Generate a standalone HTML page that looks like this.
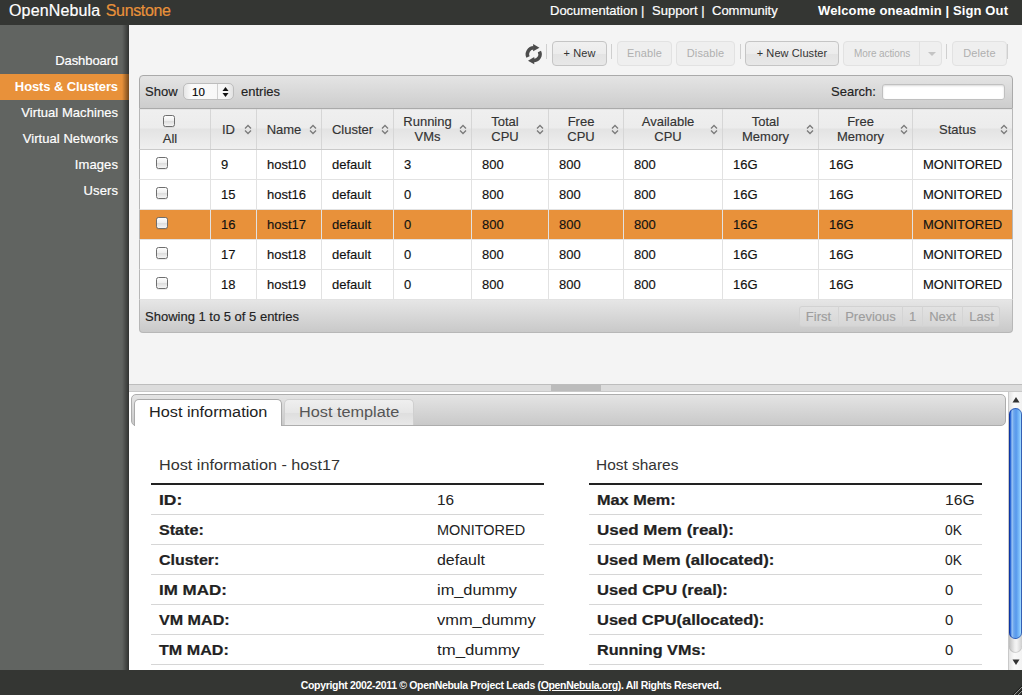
<!DOCTYPE html>
<html><head><meta charset="utf-8">
<style>
*{box-sizing:border-box;margin:0;padding:0}
html,body{width:1022px;height:695px;overflow:hidden;background:#f4f4f4;font-family:"Liberation Sans",sans-serif;position:relative}
.abs{position:absolute}
#hdr{left:0;top:0;width:1022px;height:25px;background:#343633}
#logo{left:9px;top:2px;font-size:16px;color:#fff;white-space:nowrap;-webkit-text-stroke:0.2px #fff}
#logo span{color:#e8913a;-webkit-text-stroke:0.2px #e8913a}
.tl{top:3px;font-size:13px;color:#fff;white-space:nowrap;-webkit-text-stroke:0.2px #fff}
#side{left:0;top:25px;width:129px;height:645px;background:#616461}
#side .shd{position:absolute;right:0;top:0;width:7px;height:100%;background:linear-gradient(to right,rgba(0,0,0,0),rgba(0,0,0,.5))}
.mi{position:absolute;left:0;width:129px;height:26px;line-height:26px;text-align:right;padding-right:11px;font-size:13px;color:#fff;white-space:nowrap;-webkit-text-stroke:0.2px #fff}
.mi.act{background:#e8913a;font-weight:bold;-webkit-text-stroke:0}
#ftr{left:0;top:670px;width:1022px;height:25px;background:#343633;color:#fff;font-size:10.5px;font-weight:bold;text-align:center;line-height:25px;padding-top:3px;white-space:nowrap;letter-spacing:-0.33px}
#content{left:129px;top:25px;width:893px;height:359px;background:#f4f4f4;overflow:hidden}
.btn{position:absolute;height:25px;border:1px solid #c5c5c5;border-radius:4px;background:linear-gradient(#f0f0f0 0%,#ececec 50%,#e3e3e3 51%,#e8e8e8 100%);font-size:11px;color:#333;text-align:center;line-height:23px;white-space:nowrap;letter-spacing:0.1px}
.btn.dis{border-color:#e2e2e2;background:#efefef;color:#b0b0b0}
.sep{position:absolute;width:1px;height:15px;background:#cfcfcf}
#dt{left:139px;top:75px;width:874px;height:258px;-webkit-text-stroke:0.15px currentColor}
#dttop{position:absolute;left:0;top:0;width:874px;height:34px;border:1px solid #aaa;border-radius:4px 4px 0 0;background:linear-gradient(#e4e4e4,#cdcdcd)}
#dtbot{position:absolute;left:0;top:225px;width:874px;height:33px;border:1px solid #b7b7b7;border-top:none;border-radius:0 0 4px 4px;background:linear-gradient(#e6e6e6,#c9c9c9)}
.t13{font-size:13px;color:#222;white-space:nowrap;position:absolute}
.row{position:absolute;left:0;width:874px;height:30px;background:#fff;border-bottom:1px solid #e2e2e2;border-left:1px solid #b7b7b7;border-right:1px solid #b7b7b7}
.row.sel{background:#e8913a}
.cell{position:absolute;top:0;height:29px;line-height:29px;font-size:13px;color:#111;padding-left:10px;border-left:1px solid #e2e2e2;white-space:nowrap}
.hrow{position:absolute;left:0;top:34px;width:874px;height:41px;background:linear-gradient(#dcdcdc 0,#efefef 1px,#ececec 19px,#e3e3e3 20px,#efefef 39px);border-bottom:1px solid #cacaca}
.hcell{position:absolute;top:0;height:40px;font-size:13px;color:#333;border-left:1px solid #d6d6d6;white-space:nowrap;text-align:center;line-height:14px;display:flex;align-items:center;justify-content:center;padding-left:10px;padding-right:20px;padding-top:1px}
.sort{position:absolute;right:4px;top:15px;width:8px;height:11px}
.cb{position:absolute;width:12px;height:12px;border:1px solid #6e6e6e;border-radius:2.5px;background:linear-gradient(#fdfdfd 0%,#eeeeee 50%,#dcdcdc 51%,#f4f4f4 100%);box-shadow:0 1px 0 rgba(0,0,0,.08)}
.pg{position:absolute;top:6px;height:21px;line-height:21px;font-size:13px;color:#9d9d9d;text-align:center;border-left:1px solid #d4d4d4}
#split{left:129px;top:384px;width:893px;height:8px;background:#dcdcdc;border-top:1px solid #bdbdbd;border-bottom:1px solid #c8c8c8}
#panel{left:129px;top:392px;width:879px;height:278px;background:#fff;overflow:hidden}
#nav{position:absolute;left:2px;top:2px;width:875px;height:32px;border:1px solid #adadad;border-radius:5px;background:linear-gradient(#e4e4e4,#c9c9c9)}
.tab{position:absolute;top:4px;height:27px;border:1px solid #b4b4b4;border-bottom:none;border-radius:5px 5px 0 0;font-size:14px;white-space:nowrap;line-height:25px;letter-spacing:0.9px}
.ititle{position:absolute;font-size:14px;color:#333;white-space:nowrap;letter-spacing:0.95px}
.itab{position:absolute;width:393px;border-top:2px solid #222}
.ir{position:absolute;left:0;width:393px;height:30px;border-bottom:1px solid #d6d6d6;font-size:14px;color:#222;white-space:nowrap}
.ir b{position:absolute;left:8px;top:7px;color:#222;-webkit-text-stroke:0.2px #222}
.ir span{position:absolute;top:7px}
#sb{left:1008px;top:392px;width:14px;height:278px;border-left:1px solid #c9c9c9;background:linear-gradient(to right,#e4e4e4,#fafafa 40%,#f2f2f2)}
</style></head>
<body>
<div id="hdr" class="abs">
<div id="logo" class="abs"><span style="color:#fff;-webkit-text-stroke:0.2px #fff;letter-spacing:0.15px">OpenNebula</span> <span style="letter-spacing:-0.35px;margin-left:1px">Sunstone</span></div>
<div class="abs tl" style="left:550px">Documentation |</div>
<div class="abs tl" style="left:652px">Support |</div>
<div class="abs tl" style="left:712px">Community</div>
<div class="abs tl" style="left:818px;font-weight:bold;letter-spacing:0.12px;-webkit-text-stroke:0">Welcome oneadmin | Sign Out</div>
</div>
<div id="side" class="abs">
<div class="mi" style="top:23px;letter-spacing:-0.1px">Dashboard</div>
<div class="mi act" style="top:49px;letter-spacing:-0.1px">Hosts &amp; Clusters</div>
<div class="mi" style="top:75px;letter-spacing:0.05px">Virtual Machines</div>
<div class="mi" style="top:101px;letter-spacing:0.05px">Virtual Networks</div>
<div class="mi" style="top:127px;letter-spacing:0.1px">Images</div>
<div class="mi" style="top:153px;letter-spacing:0.1px">Users</div>
<div class="shd"></div>
</div>
<div id="content" class="abs">
<svg class="abs" style="left:393px;top:17px" width="24" height="24" viewBox="0 0 24 24"><g transform="translate(11.7 12.2) scale(1.1) translate(-11.7 -11.8)"><path d="M6.5 14.3 A5.8 5.8 0 0 1 11.7 6.0" fill="none" stroke="#4c4c4c" stroke-width="3.2"/><path d="M11.2 2.6 L16.9 5.9 L11.2 9.2 Z" fill="#4c4c4c"/><path d="M16.9 9.3 A5.8 5.8 0 0 1 11.7 17.6" fill="none" stroke="#4c4c4c" stroke-width="3.2"/><path d="M12.2 14.4 L6.5 17.7 L12.2 21.0 Z" fill="#4c4c4c"/></g></svg>
<div class="sep" style="left:417px;top:19px"></div>
<div class="btn" style="left:423px;top:16px;width:55px;">+ New</div>
<div class="sep" style="left:482px;top:19px"></div>
<div class="btn dis" style="left:488px;top:16px;width:55px;">Enable</div>
<div class="btn dis" style="left:547px;top:16px;width:59px;">Disable</div>
<div class="sep" style="left:611px;top:19px"></div>
<div class="btn" style="left:616px;top:16px;width:94px;">+ New Cluster</div>
<div class="btn dis" style="left:714px;top:16px;width:99px;font-size:10px;text-align:left;padding-left:10px;letter-spacing:-0.1px">More actions<span style="position:absolute;left:75px;top:0;width:1px;height:23px;background:#e2e2e2"></span><span style="position:absolute;left:84px;top:10px;width:0;height:0;border-left:4px solid transparent;border-right:4px solid transparent;border-top:4px solid #c4c4c4"></span></div>
<div class="sep" style="left:817px;top:19px"></div>
<div class="btn dis" style="left:823px;top:16px;width:55px;">Delete</div>
<div class="sep" style="left:878px;top:19px"></div>
</div>
<div id="dt" class="abs">
<div id="dttop"><div class="t13" style="left:5px;top:8px">Show</div>
<div style="position:absolute;left:43px;top:7px;width:51px;height:17px;border:1px solid #bdbdbd;border-radius:5px;background:linear-gradient(to right,#e6e6e6,#fbfbfb 15%,#f6f6f6 85%,#e2e2e2)"><span style="position:absolute;left:8px;top:2px;font-size:11.5px;color:#000">10</span><span style="position:absolute;left:33px;top:0;width:1px;height:15px;background:#d0d0d0"></span><svg style="position:absolute;left:38px;top:3px" width="7" height="10" viewBox="0 0 7 10"><path d="M3.5 0 L6.5 4 L0.5 4 Z M3.5 10 L6.5 6 L0.5 6 Z" fill="#111"/></svg></div>
<div class="t13" style="left:101px;top:8px">entries</div>
<div class="t13" style="left:691px;top:8px">Search:</div>
<div style="position:absolute;left:742px;top:8px;width:123px;height:16px;background:#fff;border:1px solid #c0c0c0;border-radius:3px;box-shadow:inset 0 1px 2px rgba(0,0,0,.15)"></div>
</div>
<div class="hrow">
<div class="hcell" style="left:0px;width:71px;border-left:1px solid #b7b7b7;padding-top:19px"><span>All</span></div><div class="cb" style="left:24px;top:6px"></div>
<div class="hcell" style="left:71px;width:46px;"><span>ID</span><svg class="sort" viewBox="0 0 8 11"><path d="M1 4.5 L4 1.5 L7 4.5 M1 6.5 L4 9.5 L7 6.5" fill="none" stroke="#7a7a7a" stroke-width="1.3"/></svg></div>
<div class="hcell" style="left:117px;width:65px;"><span>Name</span><svg class="sort" viewBox="0 0 8 11"><path d="M1 4.5 L4 1.5 L7 4.5 M1 6.5 L4 9.5 L7 6.5" fill="none" stroke="#7a7a7a" stroke-width="1.3"/></svg></div>
<div class="hcell" style="left:182px;width:72px;"><span>Cluster</span><svg class="sort" viewBox="0 0 8 11"><path d="M1 4.5 L4 1.5 L7 4.5 M1 6.5 L4 9.5 L7 6.5" fill="none" stroke="#7a7a7a" stroke-width="1.3"/></svg></div>
<div class="hcell" style="left:254px;width:78px;padding-top:0;padding-bottom:0;line-height:15px;"><span>Running<br>VMs</span><svg class="sort" viewBox="0 0 8 11"><path d="M1 4.5 L4 1.5 L7 4.5 M1 6.5 L4 9.5 L7 6.5" fill="none" stroke="#7a7a7a" stroke-width="1.3"/></svg></div>
<div class="hcell" style="left:332px;width:77px;padding-top:0;padding-bottom:0;line-height:15px;"><span>Total<br>CPU</span><svg class="sort" viewBox="0 0 8 11"><path d="M1 4.5 L4 1.5 L7 4.5 M1 6.5 L4 9.5 L7 6.5" fill="none" stroke="#7a7a7a" stroke-width="1.3"/></svg></div>
<div class="hcell" style="left:409px;width:75px;padding-top:0;padding-bottom:0;line-height:15px;"><span>Free<br>CPU</span><svg class="sort" viewBox="0 0 8 11"><path d="M1 4.5 L4 1.5 L7 4.5 M1 6.5 L4 9.5 L7 6.5" fill="none" stroke="#7a7a7a" stroke-width="1.3"/></svg></div>
<div class="hcell" style="left:484px;width:99px;padding-top:0;padding-bottom:0;line-height:15px;"><span>Available<br>CPU</span><svg class="sort" viewBox="0 0 8 11"><path d="M1 4.5 L4 1.5 L7 4.5 M1 6.5 L4 9.5 L7 6.5" fill="none" stroke="#7a7a7a" stroke-width="1.3"/></svg></div>
<div class="hcell" style="left:583px;width:96px;padding-top:0;padding-bottom:0;line-height:15px;"><span>Total<br>Memory</span><svg class="sort" viewBox="0 0 8 11"><path d="M1 4.5 L4 1.5 L7 4.5 M1 6.5 L4 9.5 L7 6.5" fill="none" stroke="#7a7a7a" stroke-width="1.3"/></svg></div>
<div class="hcell" style="left:679px;width:94px;padding-top:0;padding-bottom:0;line-height:15px;"><span>Free<br>Memory</span><svg class="sort" viewBox="0 0 8 11"><path d="M1 4.5 L4 1.5 L7 4.5 M1 6.5 L4 9.5 L7 6.5" fill="none" stroke="#7a7a7a" stroke-width="1.3"/></svg></div>
<div class="hcell" style="left:773px;width:100px;"><span>Status</span><svg class="sort" viewBox="0 0 8 11"><path d="M1 4.5 L4 1.5 L7 4.5 M1 6.5 L4 9.5 L7 6.5" fill="none" stroke="#7a7a7a" stroke-width="1.3"/></svg></div>
<div style="position:absolute;right:0;top:0;width:1px;height:41px;background:#b7b7b7"></div>
</div>
<div class="row" style="top:75px">
<div class="cb" style="left:16px;top:7px"></div>
<div class="cell" style="left:70px;width:46px">9</div>
<div class="cell" style="left:116px;width:65px">host10</div>
<div class="cell" style="left:181px;width:72px">default</div>
<div class="cell" style="left:253px;width:78px">3</div>
<div class="cell" style="left:331px;width:77px">800</div>
<div class="cell" style="left:408px;width:75px">800</div>
<div class="cell" style="left:483px;width:99px">800</div>
<div class="cell" style="left:582px;width:96px">16G</div>
<div class="cell" style="left:678px;width:94px">16G</div>
<div class="cell" style="left:772px;width:100px">MONITORED</div>
</div>
<div class="row" style="top:105px">
<div class="cb" style="left:16px;top:7px"></div>
<div class="cell" style="left:70px;width:46px">15</div>
<div class="cell" style="left:116px;width:65px">host16</div>
<div class="cell" style="left:181px;width:72px">default</div>
<div class="cell" style="left:253px;width:78px">0</div>
<div class="cell" style="left:331px;width:77px">800</div>
<div class="cell" style="left:408px;width:75px">800</div>
<div class="cell" style="left:483px;width:99px">800</div>
<div class="cell" style="left:582px;width:96px">16G</div>
<div class="cell" style="left:678px;width:94px">16G</div>
<div class="cell" style="left:772px;width:100px">MONITORED</div>
</div>
<div class="row sel" style="top:135px">
<div class="cb" style="left:16px;top:7px"></div>
<div class="cell" style="left:70px;width:46px">16</div>
<div class="cell" style="left:116px;width:65px">host17</div>
<div class="cell" style="left:181px;width:72px">default</div>
<div class="cell" style="left:253px;width:78px">0</div>
<div class="cell" style="left:331px;width:77px">800</div>
<div class="cell" style="left:408px;width:75px">800</div>
<div class="cell" style="left:483px;width:99px">800</div>
<div class="cell" style="left:582px;width:96px">16G</div>
<div class="cell" style="left:678px;width:94px">16G</div>
<div class="cell" style="left:772px;width:100px">MONITORED</div>
</div>
<div class="row" style="top:165px">
<div class="cb" style="left:16px;top:7px"></div>
<div class="cell" style="left:70px;width:46px">17</div>
<div class="cell" style="left:116px;width:65px">host18</div>
<div class="cell" style="left:181px;width:72px">default</div>
<div class="cell" style="left:253px;width:78px">0</div>
<div class="cell" style="left:331px;width:77px">800</div>
<div class="cell" style="left:408px;width:75px">800</div>
<div class="cell" style="left:483px;width:99px">800</div>
<div class="cell" style="left:582px;width:96px">16G</div>
<div class="cell" style="left:678px;width:94px">16G</div>
<div class="cell" style="left:772px;width:100px">MONITORED</div>
</div>
<div class="row" style="top:195px">
<div class="cb" style="left:16px;top:7px"></div>
<div class="cell" style="left:70px;width:46px">18</div>
<div class="cell" style="left:116px;width:65px">host19</div>
<div class="cell" style="left:181px;width:72px">default</div>
<div class="cell" style="left:253px;width:78px">0</div>
<div class="cell" style="left:331px;width:77px">800</div>
<div class="cell" style="left:408px;width:75px">800</div>
<div class="cell" style="left:483px;width:99px">800</div>
<div class="cell" style="left:582px;width:96px">16G</div>
<div class="cell" style="left:678px;width:94px">16G</div>
<div class="cell" style="left:772px;width:100px">MONITORED</div>
</div>
<div id="dtbot"><div class="t13" style="left:5px;top:9px">Showing 1 to 5 of 5 entries</div>
<div style="position:absolute;left:659px;top:6px;width:201px;height:21px;border:1px solid #d2d2d2;border-radius:3px;background:linear-gradient(#e2e2e2,#d6d6d6)"></div>
<div class="pg" style="left:659px;width:39px;border-left:none;">First</div>
<div class="pg" style="left:698px;width:64px;">Previous</div>
<div class="pg" style="left:762px;width:20px;">1</div>
<div class="pg" style="left:782px;width:40px;">Next</div>
<div class="pg" style="left:822px;width:38px;">Last</div>
</div>
</div>
<div id="split" class="abs"><div style="position:absolute;left:422px;top:0;width:50px;height:6px;background:#bcbcbc"></div></div>
<div id="panel" class="abs">
<div id="nav">
<div class="tab" style="left:2px;width:148px;background:#fff;color:#222;height:27px;padding-left:14px;border-color:#aaa;letter-spacing:0"><span style="display:inline-block;transform:scaleX(1.161);transform-origin:0 0;">Host information</span></div>
<div class="tab" style="left:152px;width:130px;letter-spacing:0;background:linear-gradient(#efefef,#e6e6e6 50%,#dedede 51%,#e8e8e8);color:#555;height:26px;padding-left:14px;border-color:#cfcfcf"><span style="display:inline-block;transform:scaleX(1.161);transform-origin:0 0;">Host template</span></div>
</div>
<div class="ititle" style="left:30px;top:65px;letter-spacing:0;display:inline-block;transform:scaleX(1.157);transform-origin:0 0;">Host information - host17</div>
<div class="itab" style="left:22px;top:91px">
<div class="ir" style="top:0px"><b style="display:inline-block;transform:scaleX(1.25);transform-origin:0 0;">ID:</b><span style="left:286px;display:inline-block;transform:scaleX(1.096);transform-origin:0 0;">16</span></div>
<div class="ir" style="top:30px"><b style="display:inline-block;transform:scaleX(1.151);transform-origin:0 0;">State:</b><span style="left:286px;display:inline-block;transform:scaleX(1.033);transform-origin:0 0;">MONITORED</span></div>
<div class="ir" style="top:60px"><b style="display:inline-block;transform:scaleX(1.141);transform-origin:0 0;">Cluster:</b><span style="left:286px;display:inline-block;transform:scaleX(1.139);transform-origin:0 0;">default</span></div>
<div class="ir" style="top:90px"><b style="display:inline-block;transform:scaleX(1.211);transform-origin:0 0;">IM MAD:</b><span style="left:286px;display:inline-block;transform:scaleX(1.169);transform-origin:0 0;">im_dummy</span></div>
<div class="ir" style="top:120px"><b style="display:inline-block;transform:scaleX(1.15);transform-origin:0 0;">VM MAD:</b><span style="left:286px;display:inline-block;transform:scaleX(1.174);transform-origin:0 0;">vmm_dummy</span></div>
<div class="ir" style="top:150px"><b style="display:inline-block;transform:scaleX(1.15);transform-origin:0 0;">TM MAD:</b><span style="left:286px;display:inline-block;transform:scaleX(1.199);transform-origin:0 0;">tm_dummy</span></div>
</div>
<div class="ititle" style="left:467px;top:65px;letter-spacing:0;display:inline-block;transform:scaleX(1.103);transform-origin:0 0;">Host shares</div>
<div class="itab" style="left:460px;top:91px">
<div class="ir" style="top:0px"><b style="display:inline-block;transform:scaleX(1.162);transform-origin:0 0;">Max Mem:</b><span style="left:356px;display:inline-block;transform:scaleX(1.119);transform-origin:0 0;">16G</span></div>
<div class="ir" style="top:30px"><b style="display:inline-block;transform:scaleX(1.213);transform-origin:0 0;">Used Mem (real):</b><span style="left:356px;display:inline-block;transform:scaleX(0.99);transform-origin:0 0;">0K</span></div>
<div class="ir" style="top:60px"><b style="display:inline-block;transform:scaleX(1.193);transform-origin:0 0;">Used Mem (allocated):</b><span style="left:356px;display:inline-block;transform:scaleX(0.99);transform-origin:0 0;">0K</span></div>
<div class="ir" style="top:90px"><b style="display:inline-block;transform:scaleX(1.184);transform-origin:0 0;">Used CPU (real):</b><span style="left:356px;display:inline-block;transform:scaleX(1.062);transform-origin:0 0;">0</span></div>
<div class="ir" style="top:120px"><b style="display:inline-block;transform:scaleX(1.175);transform-origin:0 0;">Used CPU(allocated):</b><span style="left:356px;display:inline-block;transform:scaleX(1.062);transform-origin:0 0;">0</span></div>
<div class="ir" style="top:150px"><b style="display:inline-block;transform:scaleX(1.156);transform-origin:0 0;">Running VMs:</b><span style="left:356px;display:inline-block;transform:scaleX(1.062);transform-origin:0 0;">0</span></div>
</div>
</div>
<div id="sb" class="abs">
<svg style="position:absolute;left:3px;top:5px" width="8" height="6" viewBox="0 0 8 6"><path d="M4 0 L7.5 5.5 L0.5 5.5 Z" fill="#333"/></svg>
<div style="position:absolute;left:0;top:232px;width:13px;height:29px;border-radius:0 0 6.5px 6.5px;background:linear-gradient(to right,#bdbdbd,#efefef 45%,#f3f3f3 60%,#cfcfcf);box-shadow:inset 0 -1px 0 rgba(0,0,0,.12)"></div>
<div style="position:absolute;left:0;top:16px;width:13px;height:231px;border-radius:6.5px;background:linear-gradient(to right,#0b37b0 0%,#2f6bd8 12%,#9cc6f4 24%,#6ea8ee 36%,#5798ec 55%,#7fc0fb 80%,#a2dcff 92%,#3a6fd0 100%);box-shadow:inset 0 0 0 1px rgba(8,40,140,.55)"></div>
<svg style="position:absolute;left:3px;top:267px" width="8" height="6" viewBox="0 0 8 6"><path d="M4 6 L7.5 0.5 L0.5 0.5 Z" fill="#333"/></svg>
</div>
<div id="ftr" class="abs">Copyright 2002-2011 © OpenNebula Project Leads (<u>OpenNebula.org</u>). All Rights Reserved.</div>
<svg class="abs" style="left:1006px;top:679px" width="16" height="16" viewBox="0 0 16 16"><path d="M6.5 16.5 L16.5 6.5 M10.5 16.5 L16.5 10.5 M14.5 16.5 L16.5 14.5" stroke="#1e1f1d" stroke-width="1.2"/><path d="M7.5 16.5 L16.5 7.5 M11.5 16.5 L16.5 11.5" stroke="#8e8f8d" stroke-width="1"/></svg>
</body></html>
